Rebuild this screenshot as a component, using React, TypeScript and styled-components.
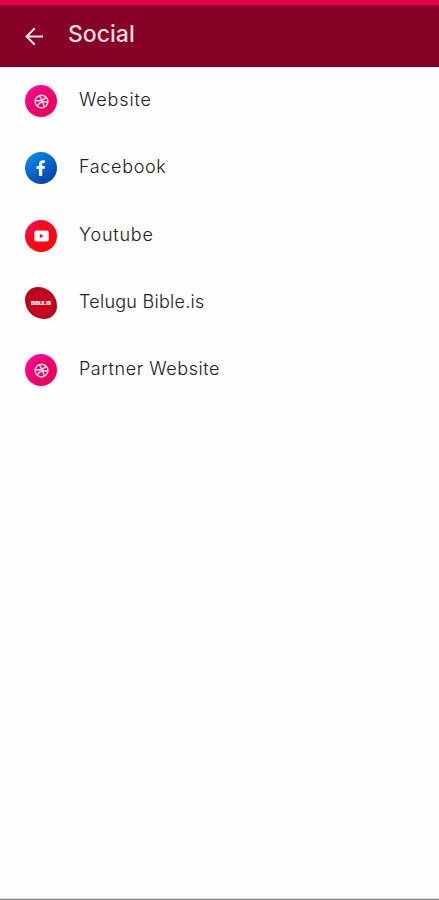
import React from "react";
import styled, { createGlobalStyle } from "styled-components";

const GlobalStyle = createGlobalStyle`
  * { box-sizing: border-box; }
  body { margin: 0; background: #fefefe; }
`;

const Screen = styled.div`
  display: flex;
  flex-direction: column;
  height: 900px;
  background: #fefefe;
  border-bottom: 1px solid #858585;
  box-shadow: inset 0 -1px 0 #d9d9d9;
  font-family: Inter, "Open Sans", sans-serif;
  overflow: hidden;
`;

const StatusBar = styled.div`
  height: 5px;
  flex: none;
  background: #e6004e;
`;

const Header = styled.header`
  display: flex;
  align-items: center;
  flex: none;
  height: 62px;
  padding-left: 25px;
  gap: 24px;
  background: #870025;
  border-bottom: 1px solid #760019;
`;

const BackButton = styled.button`
  display: flex;
  padding: 0;
  margin-top: 1px;
  border: 0;
  background: none;
`;

const Title = styled.h1`
  margin: 0 0 3px;
  color: #f3dce2;
  font-size: 23px;
  font-weight: 450;
  line-height: 30px;
  letter-spacing: 0;
`;

const List = styled.ul`
  margin: 0;
  padding: 0.4px 0 0;
  list-style: none;
`;

const Row = styled.li`
  display: flex;
  align-items: center;
  gap: 22px;
  height: 67.25px;
  padding-left: 25px;
`;

const Label = styled.span<{ $spacing: number }>`
  margin-bottom: 2px;
  color: #202020;
  font-size: 18px;
  font-weight: 300;
  line-height: 24px;
  white-space: nowrap;
  letter-spacing: ${(p) => p.$spacing}px;
`;

const Badge = styled.span<{ $fill: string; $tilted?: boolean }>`
  display: flex;
  align-items: center;
  justify-content: center;
  width: 32px;
  height: 32px;
  border-radius: ${(p) => (p.$tilted ? "40% 60% 40% 60% / 40% 60% 40% 60%" : "50%")};
  background: ${(p) => p.$fill};
`;

const BadgeText = styled.span`
  color: #fff;
  font-size: 5px;
  font-weight: 900;
  line-height: 6px;
  letter-spacing: -0.1px;
`;

const Dribbble = () => (
  <svg width="15" height="15" viewBox="0 0 16 16" fill="none" stroke="#ffe3f0" strokeWidth="1.6">
    <circle cx="8" cy="8" r="6.8" />
    <path d="M5.5 2C8.5 5.5 10 9 10.7 14M1.5 7.3C6.5 7.5 10.5 6.3 12.8 3.4M3.5 12.8C5.5 8.8 9.5 7.5 14.5 8.8" />
  </svg>
);

const Facebook = () => (
  <svg width="10" height="16" viewBox="0 0 10 16" fill="#fff">
    <path d="M3 16V9H.5V6H3V4.2C3 1.6 4.5.3 6.8.3c1 0 2 .15 2 .15V3H7.5C6.4 3 6.2 3.6 6.2 4.3V6H9L8.5 9H6.2v7z" />
  </svg>
);

const Youtube = () => (
  <svg width="15" height="12" viewBox="0 0 15 12">
    <rect x=".3" y=".5" width="14.4" height="11" rx="2" fill="#fff" />
    <path d="M5.8 3.7v4.6L9.7 6z" fill="#f3122c" />
  </svg>
);

const pink = "radial-gradient(circle at 62% 62%, #ec0060 30%, #ef0072 50%, #fb0fa4 78%)";

const links = [
  { label: "Website", spacing: 0.85, fill: pink, icon: <Dribbble /> },
  {
    label: "Facebook",
    spacing: 0.65,
    fill: "linear-gradient(145deg, #0a8de8 8%, #0868d0 45%, #063a9d 95%)",
    icon: <Facebook />,
  },
  {
    label: "Youtube",
    spacing: 0.8,
    fill: "linear-gradient(135deg, #f80a68 8%, #fb0922 35%, #fa0505 100%)",
    icon: <Youtube />,
  },
  {
    label: "Telugu Bible.is",
    spacing: 0.25,
    fill: "radial-gradient(circle, #c80620 45%, #ad061c 75%)",
    tilted: true,
    icon: <BadgeText>BIBLE.IS</BadgeText>,
  },
  { label: "Partner Website", spacing: 0.55, fill: pink, icon: <Dribbble /> },
];

export default function App() {
  return (
    <>
      <GlobalStyle />
      <Screen>
        <StatusBar />
        <Header>
          <BackButton aria-label="Back">
            <svg width="19" height="19" viewBox="0 0 19 19" fill="none" stroke="#fbe9ee" strokeWidth="2">
              <path d="M18 9.5H2M9.8 1.2L1.6 9.5l8.2 8.3" />
            </svg>
          </BackButton>
          <Title>Social</Title>
        </Header>
        <List>
          {links.map((link) => (
            <Row key={link.label}>
              <Badge $fill={link.fill} $tilted={link.tilted}>
                {link.icon}
              </Badge>
              <Label $spacing={link.spacing}>{link.label}</Label>
            </Row>
          ))}
        </List>
      </Screen>
    </>
  );
}
